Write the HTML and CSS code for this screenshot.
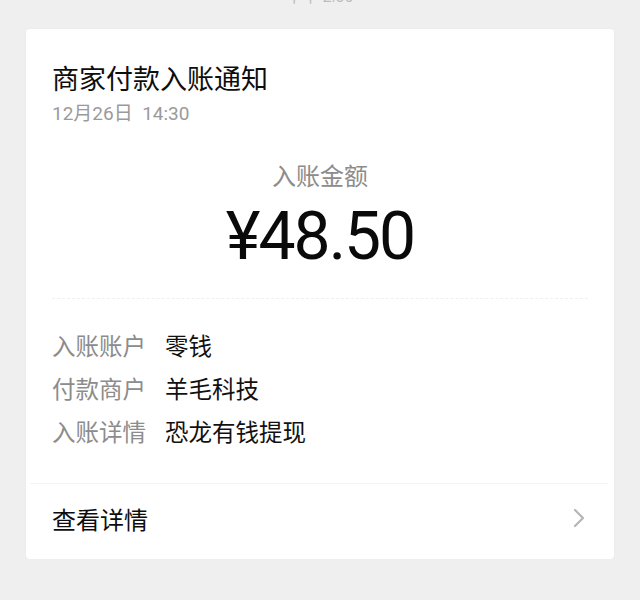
FILE: index.html
```html
<!DOCTYPE html>
<html lang="zh-CN">
<head>
    <meta charset="UTF-8">
    <meta name="viewport" content="width=device-width, initial-scale=1.0">
    <title>商家付款入账通知</title>
    <link rel="stylesheet" href="styles.css">
</head>
<body>
    <div class="stamp"><span>下午 2:30</span></div>
    <div class="card">
        <div class="head">
            <h2 class="title">商家付款入账通知</h2>
            <div class="date">12月26日&nbsp;&nbsp;14:30</div>
        </div>
        <div class="amount-box">
            <div class="amount-label">入账金额</div>
            <div class="amount">¥48.50</div>
        </div>
        <div class="divider"></div>
        <div class="rows">
            <div class="row"><span class="label">入账账户</span><span class="value">零钱</span></div>
            <div class="row"><span class="label">付款商户</span><span class="value">羊毛科技</span></div>
            <div class="row"><span class="label">入账详情</span><span class="value">恐龙有钱提现</span></div>
        </div>
        <a class="more" href="javascript:void(0);">
            <span>查看详情</span>
            <svg class="arrow" width="12" height="20" viewBox="0 0 12 20">
                <path d="M2 2 L10 10 L2 18" fill="none" stroke="#b5b5b5" stroke-width="2.2" stroke-linecap="round" stroke-linejoin="round"/>
            </svg>
        </a>
    </div>
</body>
</html>
```

FILE: styles.css
```css
body {
    font-family: Roboto, "Noto Sans CJK SC", sans-serif;
    background: #efefef;
    margin: 0;
    color: #1a1a1a;
}
.stamp {
    height: 29px;
    overflow: hidden;
    text-align: center;
}
.stamp span {
    display: block;
    margin-top: -13px;
    font-size: 16px;
    line-height: 20px;
    color: #bdbdbd;
}
.card {
    width: 588px;
    margin-left: 26px;
    background: white;
    border-radius: 4px;
    box-shadow: 0 0 2px rgba(0, 0, 0, 0.06);
    height: 530px;
}
.head {
    padding: 34px 26px 0;
}
.title {
    margin: 0;
    font-size: 27px;
    line-height: 34px;
    font-weight: normal;
    color: #0d0d0d;
}
.date {
    margin-top: 6px;
    font-size: 19px;
    line-height: 22px;
    color: #9a9a9a;
}
.amount-box {
    text-align: center;
    margin-top: 37px;
}
.amount-label {
    font-size: 24px;
    line-height: 30px;
    color: #8c8c8c;
}
.amount {
    margin-top: 7px;
    font-size: 66px;
    line-height: 76px;
    letter-spacing: -2px;
    color: #0a0a0a;
}
.divider {
    margin: 23px 26px 0;
    border-top: 1px dashed #f0f0f0;
}
.rows {
    padding: 27px 26px 28px;
}
.row {
    display: flex;
    font-size: 23.5px;
    line-height: 43px;
}
.label {
    width: 113px;
    color: #8c8c8c;
}
.value {
    color: #111;
}
.more {
    display: flex;
    justify-content: space-between;
    align-items: center;
    height: 68px;
    margin-left: 4px;
    margin-right: 6px;
    padding: 0 23px 0 22px;
    border-top: 1px solid #f3f3f3;
    font-size: 24px;
    color: #0d0d0d;
    text-decoration: none;
}
.arrow {
    display: block;
}
```
